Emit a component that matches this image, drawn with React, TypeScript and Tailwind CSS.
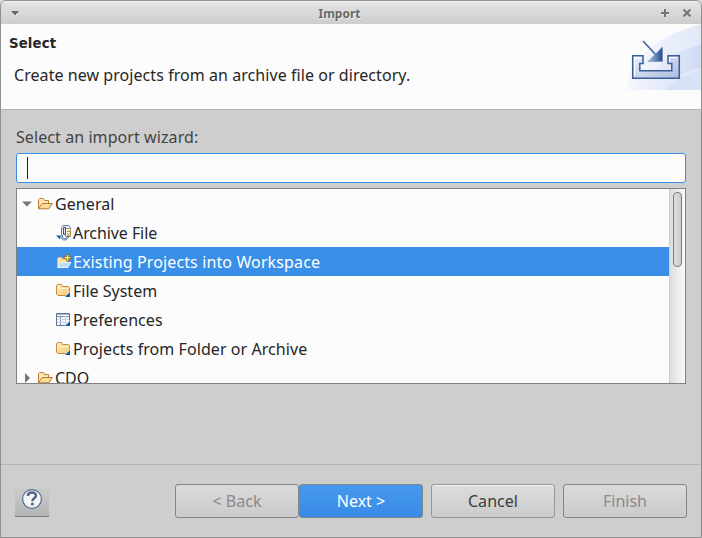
import React from "react";

function FolderOpen() {
  return (
    <svg width="16" height="14" viewBox="0 0 16 14" className="block">
      <path d="M1.5 11.5V2.5L2.5 1.5H6.5L7.5 3.5H11.5V6" fill="#fff0c8" stroke="#c08035" />
      <path d="M1.5 11.8L5 6.5H15.3L11.8 11.8Z" fill="#fbdc97" stroke="#b87527" strokeLinejoin="round" />
      <path d="M2.7 9.5V3.5H6L7 4.7H10.5" fill="none" stroke="#f8d99b" />
    </svg>
  );
}

function Folder() {
  return (
    <svg width="16" height="16" viewBox="0 0 16 16" className="block">
      <defs><linearGradient id="folderFill" x1="0" x2="1" y1="0" y2="1"><stop stopColor="#fff0c2" /><stop offset="1" stopColor="#f6ca72" /></linearGradient></defs>
      <path d="M.5 11V3L1.5 1.5H5.5L6.5 3.5H12.5L13.5 4.5V12.5H2Z" fill="url(#folderFill)" stroke="#c58b43" />
      <path d="M2 5.5H12" stroke="#fff0c6" />
      <path d="M14.5 7.5V15H7.5Z" fill="#fff" />
      <path d="M14 9V14H9Z" fill="#0c5ba5" />
    </svg>
  );
}

function Archive() {
  return (
    <svg width="16" height="16" viewBox="0 0 16 16" className="block">
      <path d="M5.5 9.5V2.5L7 .5H12.5L14.5 2.5V4" fill="#e6edf8" stroke="#5878a6" />
      <path d="M9.5 3.5H13.5L14.5 4.5V11.5H9.5Z" fill="#fff7d8" stroke="#b08d50" />
      <path d="M11 6.5H14M11 9H14" stroke="#a98a56" />
      <path d="M7.5 2.5H9.5V9.5H7.5Z" fill="#dce7f6" stroke="#35588d" />
      <path d="M4.5 10.5H6.5V12L8 13.5H9.5L11.5 12V10.5H12.5V12.5L10 15H7.5L5 13Z" fill="#b9cbe6" stroke="#486b9d" strokeWidth=".8" />
      <path d="M0 10.5H4V14.5Z" fill="#0c5ba5" />
    </svg>
  );
}

function Projects() {
  return (
    <svg width="16" height="16" viewBox="0 0 16 16" className="block">
      <path d="M1.5 13V4.5L2.5 3.5H5.5L6.5 5H12V8.5" fill="#ffe4a4" stroke="#e3b56b" />
      <path d="M1.5 13.5L4.5 8.5H14.8L12 13.5Z" fill="#b9dcff" stroke="#e9f1fb" />
      <path d="M11.5 0V7.5M7.8 3.7H15.2" stroke="#8c6c17" strokeWidth="2.6" />
      <path d="M11.5 1V6.5M8.8 3.7H14.2" stroke="#fff3aa" strokeWidth="1.2" />
    </svg>
  );
}

function Preferences() {
  return (
    <svg width="16" height="16" viewBox="0 0 16 16" className="block">
      <path d="M.5 1.5H13.5V13.5H.5Z" fill="#f5f8ff" stroke="#617493" />
      <path d="M1 2.5H13" stroke="#a5b5d0" />
      <path d="M1 4.5H13M4.5 4V13" stroke="#7f91ad" />
      <path d="M9.5 4V13M1 7.5H13M1 10.5H13" stroke="#ccd4e5" />
      <path d="M14.5 7.5V15H7.5Z" fill="#fff" />
      <path d="M14 9V14H9Z" fill="#0c5ba5" />
    </svg>
  );
}

function Banner() {
  return (
    <svg width="75" height="66" viewBox="626 24 75 66" className="block">
      <defs>
        <linearGradient id="sky" x1="0" x2="1"><stop stopColor="#f6f8fe" /><stop offset="1" stopColor="#e0e8f8" /></linearGradient>
        <linearGradient id="shade" x1="0" x2="1"><stop stopColor="#f0f4fd" stopOpacity=".3" /><stop offset="1" stopColor="#cfdbf3" /></linearGradient>
        <linearGradient id="tray" x1="0" x2="1" y1="0" y2="1"><stop stopColor="#eef2fb" /><stop offset="1" stopColor="#a9bbdf" /></linearGradient>
        <linearGradient id="arrow" x1="0" x2="1"><stop stopColor="#b3c7e5" /><stop offset="1" stopColor="#204c8e" /></linearGradient>
      </defs>
      <path d="M626 90Q631 44 701 24V90Z" fill="url(#sky)" />
      <path d="M652 73Q666 53 701 45V68Q678 72 665 90H626Q635 79 652 73Z" fill="url(#shade)" />
      <path d="M665 90Q678 75 701 70V90Z" fill="#d8e2f6" />
      <path d="M632.7 55.7H643V63.5H639.8V70.7H671.8V63.5H668V55.7H679.3V78.3H632.7Z" fill="url(#tray)" stroke="#3c5e98" strokeWidth="1.5" />
      <path d="M634.5 76.5V57.5H641.5M669.5 62V57.5H677.5" fill="none" stroke="#ffffff" />
      <path d="M643 41L657 56" stroke="#4268a4" strokeWidth="1.8" />
      <path d="M662.5 47V61.5H648Z" fill="url(#arrow)" stroke="#7592bd" strokeWidth=".6" />
    </svg>
  );
}

const children = [
  { label: "Archive File", Icon: Archive, selected: false, tracking: "tracking-[-0.08px]" },
  { label: "Existing Projects into Workspace", Icon: Projects, selected: true, tracking: "tracking-[0.12px]" },
  { label: "File System", Icon: Folder, selected: false, tracking: "tracking-normal" },
  { label: "Preferences", Icon: Preferences, selected: false, tracking: "tracking-[0.05px]" },
  { label: "Projects from Folder or Archive", Icon: Folder, selected: false, tracking: "tracking-[0.065px]" },
];

const buttonBase = "flex h-[34px] w-[124px] items-center justify-center rounded-[3px] border text-[16px] leading-none pb-px";

export default function App() {
  return (
    <div className="h-[538px] w-[702px] overflow-hidden bg-[#deddd9]">
      <div className="flex h-full w-full flex-col overflow-hidden rounded-t-[6px] border border-[#909090] bg-[#cecece] font-['Noto_Sans',sans-serif] text-[16px] text-[#262626]">
        <header className="flex h-[23px] shrink-0 items-center justify-between border-t border-[#f3f3f3] bg-linear-to-b from-[#e4e4e4] to-[#cdcdcd] px-[9px]">
          <div className="w-10">
            <svg width="10" height="7" viewBox="0 0 10 7"><path d="M1 1H9L5 5.5Z" fill="#686868" /><path d="M2 3.5L5 6.5L8 3.5" fill="none" stroke="#f4f4f4" strokeWidth=".7" /></svg>
          </div>
          <h1 className="pt-px pr-[23px] text-[12px] leading-none font-bold text-[#686868] [text-shadow:1px_1px_#eeeeee]">Import</h1>
          <div className="flex w-10 items-center justify-end gap-[12px]">
            <svg width="10" height="10" viewBox="0 0 10 10"><path d="M5 1.5V9.5M1 5.5H9" stroke="#f4f4f4" strokeWidth="2" /><path d="M5 1V9M1 5H9" stroke="#757575" strokeWidth="2" /></svg>
            <svg width="10" height="10" viewBox="0 0 10 10"><path d="M1.5 2L8.5 9M8.5 2L1.5 9" stroke="#f4f4f4" strokeWidth="2" /><path d="M1.5 1.5L8.5 8.5M8.5 1.5L1.5 8.5" stroke="#757575" strokeWidth="2.2" /></svg>
          </div>
        </header>

        <section className="flex h-[86px] shrink-0 justify-between border-b border-[#b5b5b5] bg-[#fcfcfc]">
          <div className="pl-2 pt-[11px]">
            <h2 className="font-['DejaVu_Sans',sans-serif] text-[13.33px] leading-[18px] font-bold tracking-[0.1px]">Select</h2>
            <p className="pl-[5px] pt-[11px] leading-[22px] tracking-[0.06px]">Create new projects from an archive file or directory.</p>
          </div>
          <Banner />
        </section>

        <main className="flex h-[354px] shrink-0 flex-col px-[15px] pt-[16px]">
          <label className="h-[27px] leading-[22px] tracking-[0.08px] text-[#444444]">Select an import wizard:</label>
          <div className="flex h-[30px] shrink-0 items-center rounded-[3px] border border-[#3a8ee6] bg-[#fcfcfc] pl-[10px]">
            <div className="h-[22px] w-px bg-[#202020]" />
          </div>
          <div className="mt-[5px] flex h-[196px] shrink-0 overflow-hidden border border-[#828282] bg-[#fcfcfc]">
            <div className="flex-1 overflow-hidden">
              <div className="flex h-[29px] items-center pl-[5px]">
                <svg width="10" height="6" viewBox="0 0 10 6"><path d="M0 .5H10L5 5.5Z" fill="#777" /></svg>
                <div className="ml-[5px] w-[18px]"><FolderOpen /></div>
                <span className="tracking-[0.08px]">General</span>
              </div>
              {children.map(({ label, Icon, selected, tracking }) => (
                <div key={label} className={selected ? "flex h-[29px] items-center bg-[#398ee7] pl-[39px] text-white" : "flex h-[29px] items-center pl-[39px]"}>
                  <div className="w-[17px]"><Icon /></div>
                  <span className={tracking}>{label}</span>
                </div>
              ))}
              <div className="flex h-[29px] items-center pl-[8px]">
                <svg width="5" height="10" viewBox="0 0 5 10"><path d="M0 0V10L5 5Z" fill="#777" /></svg>
                <div className="ml-[7px] w-[18px]"><FolderOpen /></div>
                <span>CDO</span>
              </div>
            </div>
            <div className="w-4 shrink-0 border-l border-[#cecece] bg-linear-to-r from-[#dddddd] to-[#fafafa] pt-[3px] pl-[3px]">
              <div className="h-[75px] w-[9px] rounded-[4px] border border-[#7c7c7c] bg-linear-to-r from-[#dedede] to-[#cccccc]" />
            </div>
          </div>
        </main>

        <footer className="flex min-h-0 flex-1 items-start border-t border-[#b6b6b6] pt-[19px] pl-[14px]">
          <button className="mt-px flex h-[32px] w-[34px] items-start justify-center border-b border-[#7d7d7d] bg-linear-to-b from-[#cecece] to-[#b4b4b4] pt-[3px]">
            <svg width="22" height="22" viewBox="0 0 22 22">
              <circle cx="11" cy="11" r="9.4" fill="#f4f4f2" stroke="#526b92" strokeWidth="1.2" />
              <path d="M6.8 7.8C7.1 3.6 15 3.3 15 7.5C15 10.3 11.4 10.3 11.4 13.2" fill="none" stroke="#4f678f" strokeWidth="2.5" />
              <circle cx="11.3" cy="16.1" r="1.5" fill="#4f678f" />
            </svg>
          </button>
          <div className="ml-[126px] flex">
            <button className={`${buttonBase} border-[#858585] bg-linear-to-b from-[#dadada] to-[#cbcbcb] text-[#8a8a8a]`}>&lt; Back</button>
            <button className={`${buttonBase} border-[#81868b] bg-linear-to-b from-[#4799ef] to-[#388be5] text-white`}>Next &gt;</button>
            <button className={`${buttonBase} ml-2 border-[#969696] bg-linear-to-b from-[#dddddd] to-[#cbcbcb] tracking-[0.05px] text-[#3c3c3c] shadow-[inset_0_1px_#f1f1f1]`}>Cancel</button>
            <button className={`${buttonBase} ml-2 border-[#858585] bg-linear-to-b from-[#dadada] to-[#cbcbcb] text-[#8a8a8a]`}>Finish</button>
          </div>
        </footer>
      </div>
    </div>
  );
}
